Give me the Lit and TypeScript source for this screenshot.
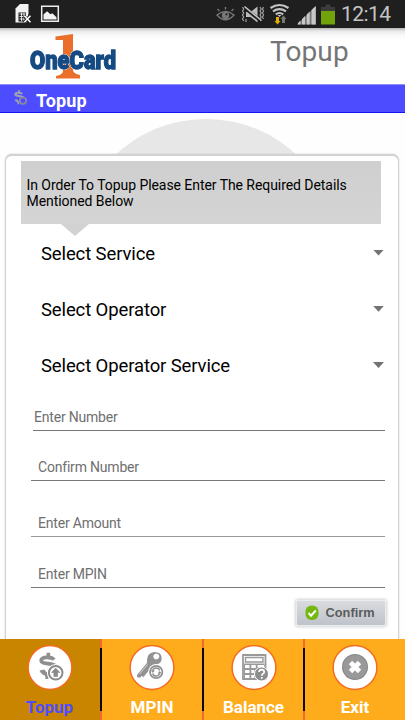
import { LitElement, html, svg, css } from "lit";
import { customElement, property } from "lit/decorators.js";

@customElement("status-bar")
class StatusBar extends LitElement {
  static styles = css`
    :host { display: flex; height: 28px; background: #1f1f1f; position: relative; }
    svg { display: block; width: 335px; height: 28px; flex: none; }
    .time { font: 21px/28px Roboto, sans-serif; color: #c4c4c4; margin-left: 6px; white-space: nowrap; letter-spacing: -0.55px; }
  `;
  render() {
    return html`
      <svg viewBox="0 0 335 28">
        <path d="M20 4h8.500v9l-2 9.500H15.500V8.500z" fill="#f2f2f2" />
        <path d="M18.500 12.500h7.500v9h-7.500z" fill="#1f1f1f" />
        <path d="M19.500 14h6M19.500 16.500h6M19.500 19h6M21.500 13v8M24 13v8" stroke="#eee" stroke-width=".9" />
        <path d="M24 16l6 6.500M30 16l-6 6.500" stroke="#1f1f1f" stroke-width="3" />
        <path d="M24.300 15.800l6.200 6.400M30.500 15.800l-6.200 6.400" stroke="#fff" stroke-width="1.500" />
        <path d="M41.700 6.200h16.600v15.100H41.700z" fill="none" stroke="#eee" stroke-width="1.500" />
        <path d="M43.500 19.500v-5l3.500-3.200 3.500 3 1.800-1 4.200 4v2.200z" fill="#f2f2f2" />

        <g fill="none" stroke="#777" stroke-width="1.400">
          <path d="M217 15q8.500-7 17 0q-8.500 9.500-17 0z" />
          <path d="M219.500 11l-2-2M225.500 9.500V7M231.500 11l2-2" />
        </g>
        <circle cx="225.500" cy="15.500" r="3.700" fill="#777" />
        <circle cx="226.500" cy="14.300" r="1.100" fill="#222" />

        <path d="M246 12h4.500l7-5.500v16l-7-5.500H246z" fill="#bbb" />
        <path d="M243 6.500l18 14.500" stroke="#1f1f1f" stroke-width="3.400" />
        <path d="M244.500 6.500l17 14" stroke="#c8c8c8" stroke-width="1.500" />
        <path d="M242.500 7l1.200 2-1.200 2 1.200 2-1.200 2 1.200 2-1.200 2 1.200 2M246 19v3M260 7l1.200 2-1.200 2 1.200 2-1.200 2 1.200 2-1.200 2 1.200 2M263.500 7l-1 2 1 2-1 2 1 2-1 2 1 2" fill="none" stroke="#aaa" stroke-width="1.100" />

        <g fill="none" stroke="#c4c4c4" stroke-width="2.200">
          <path d="M270.500 8q9-6 18 0" />
          <path d="M273 11.300q6.500-4.300 13 0" />
          <path d="M275.800 14.300q3.700-2.600 7.400 0" />
        </g>
        <path d="M277.500 15h4l-2 2z" fill="#c4c4c4" />
        <path d="M276 17h3v4h1.500l-3 3.500-3-3.500H276z" fill="#e0b000" />
        <path d="M282 23v-4h-1.500l3-3.500 3 3.500H285v4z" fill="#777" />

        <path d="M297 24.500L316 6v18.500z" fill="#777" />
        <path d="M298 24.500v-1.500l2.500-2.500v4zM302 24.500V19l3-3v8.500zM306.700 24.500v-10l3-3v13zM311.500 24.500V10L315.700 6v18.500z" fill="#c8c8c8" />
        <path d="M325.500 4.500h5V7h4.500v4h-14V7h4.500z" fill="#3b3b3b" />
        <path d="M321 11h14v13.500h-14z" fill="#71a40b" />
      </svg>
      <span class="time">12:14</span>
    `;
  }
}

const dollar = (color: string) => svg`
  <path d="M27 14.800C25 11.500 14 11.300 14.200 15.500C14.500 20 26.500 17 29.500 21.500" fill="none" stroke="${color}" stroke-width="3.800" />
  <path d="M19.500 7.800h3.700v4.500h-3.700zM12.500 25.500l5-1q.5 1.800 3 3l1 6.500h-3l-.5-3.500q-3.500-.8-5.500-5z" fill="${color}" />
`;

const icons = {
  topup: svg`
    ${dollar("#8f8f8f")}
    <circle cx="28.700" cy="27.800" r="8.800" fill="#fff" />
    <circle cx="28.700" cy="27.800" r="6.800" fill="#fff" stroke="#8b8b8b" stroke-width="2" />
    <path d="M28.700 22.800l4.800 5h-2.600v4h-4.400v-4h-2.600z" fill="#8b8b8b" />`,
  mpin: svg`
    <path fill-rule="evenodd" d="M25.500 7q7 0 7.200 6 0 6-6.500 6.500-2 .5-3.500 2.500L14.500 32l-2-1-1.500 1.700-3-.7L8 30l9.500-11.500Q18.500 17 18 14.500 18.500 7.500 25.500 7zM27.300 8.500a3 3 0 1 0 .01 0z" fill="#929292" />
    <path d="M18.500 19.500L10.500 29" stroke="#d2d2d2" stroke-width="1" />
    <circle cx="27.200" cy="27" r="8" fill="#fff" />
    <circle cx="27.200" cy="27" r="6.200" fill="#fff" stroke="#929292" stroke-width="1.800" />
    <path d="M23.700 26q.5-3 3.500-3t3.500 2.500M30.700 28q-.5 3-3.500 3t-3.500-2.500" fill="none" stroke="#929292" stroke-width="1.500" />
    <path d="M21.700 25.500h4.200l-2.100 2.600zM32.700 28.500h-4.200l2.100-2.600z" fill="#929292" />`,
  balance: svg`
    <path d="M12 10h22.500v24H12z" fill="#fff" stroke="#999" stroke-width="1.800" />
    <path d="M14.500 12.500H32v4.500H14.500z" fill="#fff" stroke="#999" stroke-width="1.400" />
    <path d="M13 18.500h20.500v15H13z" fill="#999" />
    <path d="M14 20h4.500v3H14zM20.300 20h4.500v3h-4.500zM26.500 20H33v2h-6.500zM14 25h4.500v3H14zM20.300 25h3v3h-3zM14 30h4.500v3H14zM20.300 30h3v3h-3z" fill="#fff" />
    <circle cx="30.500" cy="29" r="7" fill="#8d8d8d" stroke="#fff" />
    <path d="M28 27q.3-2.300 2.700-2.300 2.500.1 2.500 2.200 0 1.300-1.500 2-.9.500-.9 1.800M30.700 32v1.800" fill="none" stroke="#fff" stroke-width="1.700" />`,
  exit: svg`
    <circle cx="23" cy="22" r="13" fill="#868686" />
    <circle cx="23" cy="22" r="12" fill="#999" />
    <path d="M18.500 17.500l9 9M27.500 17.500l-9 9" stroke="#fff" stroke-width="4.800" />`,
};

@customElement("nav-item")
class NavItem extends LitElement {
  @property() label = "";
  @property() icon: keyof typeof icons = "topup";
  static styles = css`
    :host { display: flex; flex-direction: column; align-items: center; box-sizing: border-box; height: 81px; padding-top: 6px; background: #feac1b; color: #fff; }
    svg { display: block; width: 46px; height: 46px; flex: none; }
    .label { font: bold 17px/20px Roboto, sans-serif; margin-top: 6px; white-space: nowrap; }
  `;
  render() {
    return html`
      <svg viewBox="0 0 46 46">
        <circle cx="23" cy="22.500" r="21.900" fill="#fff" stroke="#f36b21" stroke-width="1.500" />
        ${icons[this.icon]}
      </svg>
      <span class="label">${this.label}</span>
    `;
  }
}

@customElement("app-root")
class AppRoot extends LitElement {
  static styles = css`
    :host { display: flex; flex-direction: column; width: 405px; height: 720px; overflow: hidden; background: #fff; font-family: Roboto, sans-serif; color: #000; }
    .header { display: flex; height: 56px; flex: none; background: linear-gradient(#b5b5b5, #e9e9e9 3px, #f8f8f8 7px, #fff 12px); }
    .logo { width: 135px; height: 56px; flex: none; overflow: visible; }
    .brand { filter: drop-shadow(0 0 0.5px #fff) drop-shadow(0 0 0.5px #fff) drop-shadow(0 0 0.4px #fff); }
    .screen { font-size: 28px; line-height: 47px; color: #757575; margin-left: 135px; letter-spacing: 0.1px; }
    .title { display: flex; align-items: center; box-sizing: border-box; height: 29px; flex: none; background: #4d4dff; border-top: 1px solid #8f8ff5; border-bottom: 1px solid #1515f2; color: #fff; font-size: 18px; font-weight: bold; letter-spacing: 0.15px; }
    .title svg { width: 16px; height: 18px; margin: 0 8px 3px 12px; }
    .title span { line-height: 20px; padding-top: 5px; }
    .main { height: 526px; flex: none; position: relative; overflow: hidden; padding: 41px 6px 0 5px; box-sizing: border-box; background: #fefefe; }
    .disc { position: absolute; left: 73px; top: 6px; width: 266px; height: 266px; border-radius: 50%; background: #e7e7e7; }
    .card { position: relative; box-sizing: border-box; height: 520px; background: #fff; border: 1px solid #d2d2d2; border-top-width: 2px; border-radius: 7px; box-shadow: 0 0 1.5px #bbb; padding: 5px 11px 0 15px; }
    .note { display: flex; align-items: center; box-sizing: border-box; width: 360px; height: 63px; background: linear-gradient(#cfcfcf, #d4d4d4); padding: 0 0 0 5.500px; font-size: 14px; line-height: 16px; letter-spacing: -0.060px; white-space: nowrap; }
    .tip { width: 28px; height: 12px; margin-left: 40px; background: #d2d2d2; clip-path: polygon(0 0, 100% 0, 50% 100%); }
    .select { display: flex; align-items: center; justify-content: space-between; height: 56.200px; padding: 0 0 0 20px; font-size: 18.500px; letter-spacing: -0.120px; }
    .selects { margin-top: -10px; width: 363px; }
    .arrow { width: 11px; height: 6px; background: #737373; clip-path: polygon(0 0, 100% 0, 50% 100%); margin-top: -3px; }
    .field { box-sizing: border-box; border-bottom: 1px solid #777; color: #6f6f6f; font-size: 14px; line-height: 24px; padding-bottom: 1px; width: 354px; margin-left: 10px; padding-left: 7px; letter-spacing: -0.2px; display: flex; align-items: flex-end; }
    .f1 { width: 352px; margin-left: 12px; padding-left: 1px; height: 36px; }
    .f2 { height: 50px; }
    .f3 { height: 56px; border-color: #999; }
    .f4 { height: 51px; }
    .confirm { display: flex; align-items: center; box-sizing: border-box; width: 90px; height: 26px; margin: 12.500px 0 0 275px; padding-left: 8px; gap: 6.500px; border: 1px solid #e9ebed; border-radius: 2px; background: linear-gradient(#d9dbdf, #bfc3ca); box-shadow: 0 0 3px 1px #d2d2d2; font: bold 12.800px/16px "Liberation Sans", sans-serif; color: #5c5c5c; }
    .confirm svg { width: 14px; height: 16px; flex: none; }
    .nav { display: grid; grid-template-columns: 99px 3px 100px 2px 99px 2px 100px; height: 81px; flex: none; }
    .nav .active { background: #c98500; color: #4d4dff; }
    .rule { background: linear-gradient(#f26a30 9px, #0a0a0a 9px, #0a0a0a 72px, #f26a30 72px); }
    .first { background: linear-gradient(90deg, #c98500 1px, transparent 1px), linear-gradient(#f26a30 9px, #0a0a0a 9px, #0a0a0a 72px, #f26a30 72px); }
  `;
  render() {
    return html`
      <status-bar></status-bar>
      <div class="header">
        <svg class="logo" viewBox="0 0 135 56">
          <path d="M55.500 8.500L73 6v36q0 3.500 7 5v3.500H56V48q7-1.500 7-5V12h-7.500z" fill="#e96f2a" />
          <text class="brand" x="30" y="41" textLength="86" lengthAdjust="spacingAndGlyphs" font-family="Roboto, sans-serif" font-size="26.500" font-weight="900" fill="#154a82" stroke="#154a82" stroke-width="1.300">OneCard</text>
        </svg>
        <span class="screen">Topup</span>
      </div>
      <div class="title">
        <svg viewBox="8 5 30 31">
          ${dollar("#a2a2b4")}
          <circle cx="28.500" cy="27.500" r="6" fill="#4d4dff" stroke="#8d8d99" stroke-width="3" />
        </svg>
        <span>Topup</span>
      </div>
      <div class="main">
        <div class="disc"></div>
        <div class="card">
          <div class="note"><div>In Order To Topup Please Enter The Required Details<br />Mentioned Below</div></div>
          <div class="tip"></div>
          <div class="selects">
            ${["Select Service", "Select Operator", "Select Operator Service"].map(
              (name) => html`<div class="select"><span>${name}</span><i class="arrow"></i></div>`
            )}
          </div>
          <div class="field f1">Enter Number</div>
          <div class="field f2">Confirm Number</div>
          <div class="field f3">Enter Amount</div>
          <div class="field f4">Enter MPIN</div>
          <div class="confirm">
            <svg viewBox="0 0 14 16">
              <rect x=".5" y=".5" width="13" height="14.500" rx="6" fill="#74b80f" />
              <path d="M3.500 8l2.500 2.700L10.800 5.500" fill="none" stroke="#fff" stroke-width="2" />
            </svg>
            <span>Confirm</span>
          </div>
        </div>
      </div>
      <div class="nav">
        <nav-item class="active" label="Topup" icon="topup"></nav-item>
        <div class="first"></div>
        <nav-item label="MPIN" icon="mpin"></nav-item>
        <div class="rule"></div>
        <nav-item label="Balance" icon="balance"></nav-item>
        <div class="rule"></div>
        <nav-item label="Exit" icon="exit"></nav-item>
      </div>
    `;
  }
}
